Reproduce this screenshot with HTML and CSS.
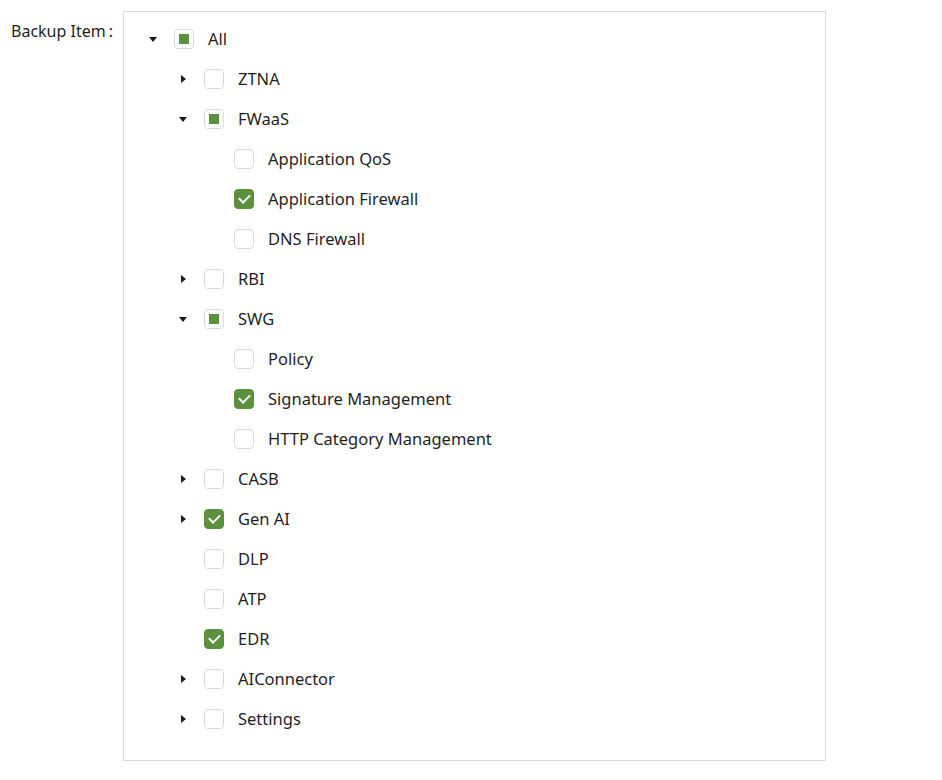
FILE: index.html
```html
<!DOCTYPE html>
<html lang="en">
<head>
<meta charset="utf-8">
<title>Backup Item</title>
<link rel="stylesheet" href="styles.css">
</head>
<body>
<div class="form-row">
  <div class="label">Backup Item<span class="colon">:</span></div>
  <div class="tree-box">
    <ul class="tree">
      <li class="node lvl0"><span class="sw open"></span><span class="cb half"></span><span class="txt">All</span></li>
      <li class="node lvl1"><span class="sw closed"></span><span class="cb"></span><span class="txt">ZTNA</span></li>
      <li class="node lvl1"><span class="sw open"></span><span class="cb half"></span><span class="txt">FWaaS</span></li>
      <li class="node lvl2"><span class="sw"></span><span class="cb"></span><span class="txt">Application QoS</span></li>
      <li class="node lvl2"><span class="sw"></span><span class="cb on"></span><span class="txt">Application Firewall</span></li>
      <li class="node lvl2"><span class="sw"></span><span class="cb"></span><span class="txt">DNS Firewall</span></li>
      <li class="node lvl1"><span class="sw closed"></span><span class="cb"></span><span class="txt">RBI</span></li>
      <li class="node lvl1"><span class="sw open"></span><span class="cb half"></span><span class="txt">SWG</span></li>
      <li class="node lvl2"><span class="sw"></span><span class="cb"></span><span class="txt">Policy</span></li>
      <li class="node lvl2"><span class="sw"></span><span class="cb on"></span><span class="txt">Signature Management</span></li>
      <li class="node lvl2"><span class="sw"></span><span class="cb"></span><span class="txt">HTTP Category Management</span></li>
      <li class="node lvl1"><span class="sw closed"></span><span class="cb"></span><span class="txt">CASB</span></li>
      <li class="node lvl1"><span class="sw closed"></span><span class="cb on"></span><span class="txt">Gen AI</span></li>
      <li class="node lvl1"><span class="sw"></span><span class="cb"></span><span class="txt">DLP</span></li>
      <li class="node lvl1"><span class="sw"></span><span class="cb"></span><span class="txt">ATP</span></li>
      <li class="node lvl1"><span class="sw"></span><span class="cb on"></span><span class="txt">EDR</span></li>
      <li class="node lvl1"><span class="sw closed"></span><span class="cb"></span><span class="txt">AIConnector</span></li>
      <li class="node lvl1"><span class="sw closed"></span><span class="cb"></span><span class="txt">Settings</span></li>
    </ul>
  </div>
</div>
</body>
</html>
```
FILE: styles.css
```css
html, body {
  margin: 0;
  padding: 0;
  background: #ffffff;
}
body {
  font-family: "Noto Sans", "Open Sans", sans-serif;
  color: #1f1f1f;
}
.form-row {
  display: flex;
  align-items: flex-start;
  padding: 11px 0 0 11px;
}
.label {
  width: 112px;
  font-size: 16px;
  line-height: 20px;
  padding-top: 10px;
  color: #1f1f1f;
  white-space: nowrap;
}
.colon {
  margin-left: 3px;
}
.tree-box {
  width: 701px;
  height: 748px;
  border: 1px solid #dadada;
  box-sizing: content-box;
}
.tree {
  list-style: none;
  margin: 0;
  padding: 7px 0 21px 17px;
}
.node {
  display: flex;
  align-items: center;
  height: 40px;
  font-size: 16.5px;
}
.lvl1 { padding-left: 30px; }
.lvl2 { padding-left: 60px; }
.sw {
  width: 24px;
  height: 20px;
  margin-right: 9px;
  position: relative;
  flex: none;
}
.sw.open::after {
  content: "";
  position: absolute;
  left: 8px;
  top: 8px;
  border-left: 4px solid transparent;
  border-right: 4px solid transparent;
  border-top: 5px solid #1a1a1a;
}
.sw.closed::after {
  content: "";
  position: absolute;
  left: 10px;
  top: 6px;
  border-top: 4px solid transparent;
  border-bottom: 4px solid transparent;
  border-left: 5px solid #1a1a1a;
}
.cb {
  width: 20px;
  height: 20px;
  box-sizing: border-box;
  border: 1px solid #d9d9d9;
  border-radius: 4px;
  background: #fff;
  flex: none;
  position: relative;
}
.cb.half::after {
  content: "";
  position: absolute;
  left: 4px;
  top: 4px;
  width: 10px;
  height: 10px;
  background: #5b903f;
}
.cb.on {
  background: #5b903f;
  border-color: #5b903f;
}
.cb.on::after {
  content: "";
  position: absolute;
  left: 6px;
  top: 2px;
  width: 5px;
  height: 9px;
  border-right: 2px solid #fff;
  border-bottom: 2px solid #fff;
  transform: rotate(45deg);
}
.txt {
  margin-left: 14px;
  line-height: 22px;
  white-space: nowrap;
}
```
